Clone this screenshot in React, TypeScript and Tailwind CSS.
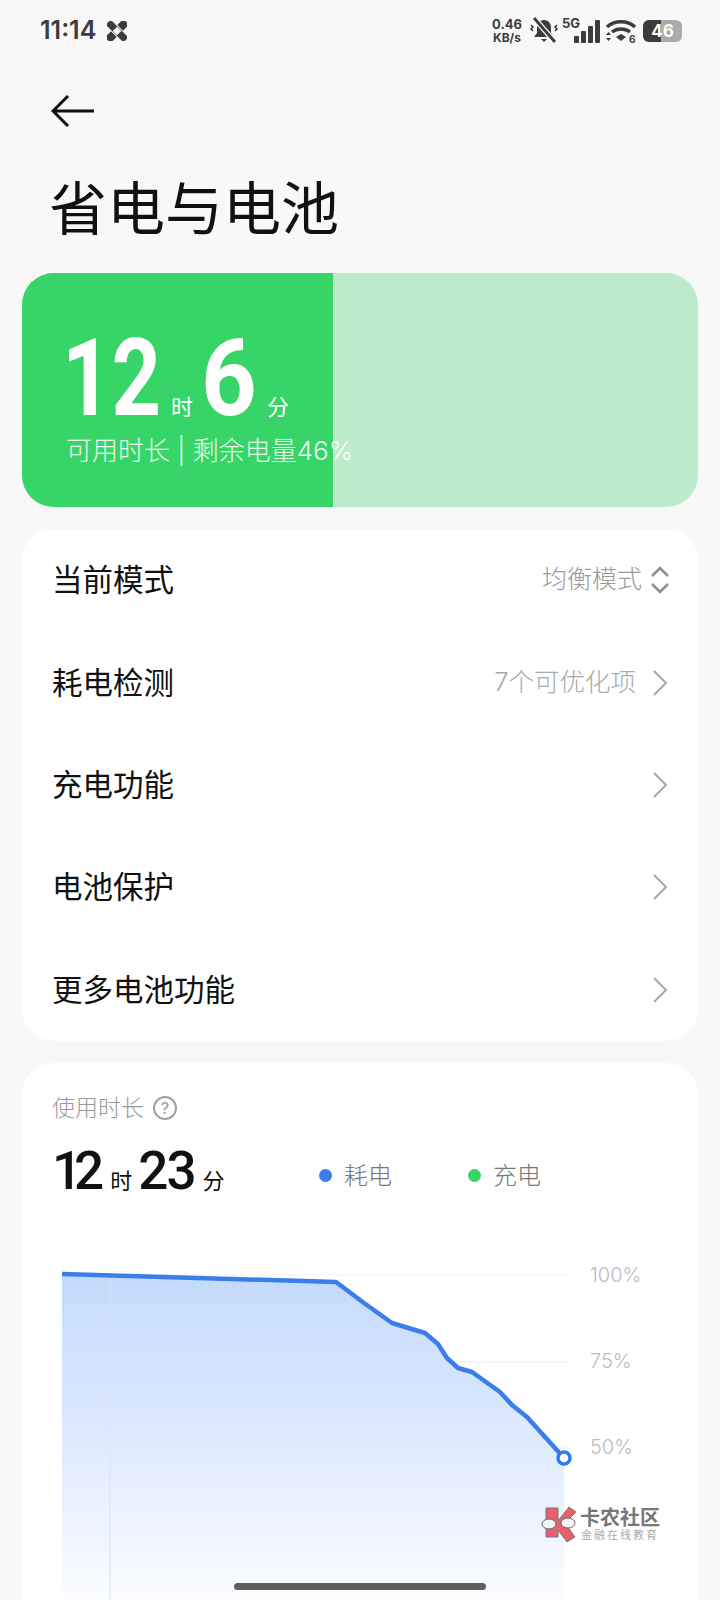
const CJK = "font-['Inter','Noto_Sans_CJK_SC',sans-serif]";

const rows = [
  { label: "耗电检测", value: "7个可优化项" },
  { label: "充电功能" },
  { label: "电池保护" },
  { label: "更多电池功能" },
];

// points of the battery curve, in page coordinates
const curve =
  "62,1274 336,1282 364,1303 392,1323 425,1333 438,1344 447,1358 458,1368 472,1372 500,1392 512,1405 527,1417 564,1458";

function Chevron() {
  return (
    <svg width="16" height="28" viewBox="0 0 16 28" className="block">
      <path d="M2 2l12 12L2 26" stroke="#a8a8a8" strokeWidth="2" fill="none" />
    </svg>
  );
}

function StatusIcons() {
  return (
    <div className="flex items-center text-[#3c3c3c]">
      <div className="mr-[7px] flex flex-col items-center text-[12px] leading-[13px] font-bold">
        <span className="text-[13px]">0.46</span>
        <span>KB/s</span>
      </div>
      {/* muted bell */}
      <svg width="30" height="28" viewBox="0 0 30 28" className="mr-[3px]">
        <path d="M15 3c-5 0-7 4-7 8v5l-3 4h20l-3-4v-5c0-4-2-8-7-8z" fill="#3c3c3c" />
        <path d="M12 22h6l-3 3z" fill="#3c3c3c" />
        <path d="M5 1l21 24" stroke="#f8f8f8" strokeWidth="5.5" />
        <path d="M5 1l21 24" stroke="#3c3c3c" strokeWidth="2.8" />
        <path d="M2 8l2 2-2 2 2 2M28 8l-2 2 2 2-2 2" stroke="#3c3c3c" strokeWidth="1.6" fill="none" />
      </svg>
      <div className="relative h-[26px] w-[38px]">
        <span className="absolute top-[-4px] left-0 text-[13px] font-bold">5G</span>
        <svg width="38" height="26" viewBox="0 0 38 26" className="absolute inset-0">
          <rect x="12" y="18" width="5" height="7" rx="1" fill="#3c3c3c" />
          <rect x="19" y="13" width="5" height="12" rx="1" fill="#3c3c3c" />
          <rect x="26" y="8" width="5" height="17" rx="1" fill="#3c3c3c" />
          <rect x="33" y="2" width="5" height="23" rx="1" fill="#3c3c3c" />
        </svg>
      </div>
      <svg width="32" height="28" viewBox="0 0 32 28" className="mr-[6px] ml-[5px]">
        <path d="M2 10c7-7 21-7 28 0" stroke="#3c3c3c" strokeWidth="3.4" fill="none" />
        <path d="M7 15c5-4 13-4 18 0" stroke="#3c3c3c" strokeWidth="3.4" fill="none" />
        <path d="M11 20l5-3 5 3-5 4z" fill="#3c3c3c" />
        <path d="M1 18l2.5-3 2.5 3zM1 21l2.5 3 2.5-3z" fill="#3c3c3c" />
        <text x="24" y="26" fontSize="10" fontWeight="700" fill="#3c3c3c">6</text>
      </svg>
      <div className="relative flex h-[22px] w-[39px] items-center justify-center overflow-hidden rounded-[6px] bg-[#aaaaaa] text-[17px] leading-[22px] font-bold text-white">
        <div className="absolute inset-y-0 left-0 w-[18px] bg-[#3c3c3c]" />
        <span className="relative">46</span>
      </div>
    </div>
  );
}

function Chart() {
  return (
    <svg width="620" height="340" viewBox="52 1260 620 340" className="mt-[58px] ml-[30px] block">
      <defs>
        <linearGradient id="area" x1="0" y1="1274" x2="0" y2="1600" gradientUnits="userSpaceOnUse">
          <stop offset="0" stopColor="#c4dafc" />
          <stop offset="0.4" stopColor="#d8e7fe" />
          <stop offset="0.8" stopColor="#eff5ff" />
          <stop offset="1" stopColor="#fcfdff" />
        </linearGradient>
      </defs>
      <polygon points={`${curve} 564,1600 62,1600`} fill="url(#area)" />
      {[1275, 1362, 1448, 1534].map((y) => (
        <line key={y} x1="62" x2="570" y1={y} y2={y} stroke="#dfe3ea" strokeWidth="1" strokeDasharray="1 1" />
      ))}
      <line x1="110" x2="110" y1="1274" y2="1600" stroke="#d9e3f3" strokeWidth="1" />
      <polyline points={curve} fill="none" stroke="#3b7dea" strokeWidth="4.5" strokeLinejoin="round" />
      <circle cx="564" cy="1458" r="6" fill="#fff" stroke="#2f7af0" strokeWidth="3.5" />
      <g fontSize="20" fill="#bcbcbc" fontFamily="Inter, sans-serif" fontWeight="300">
        <text x="590" y="1282">100%</text>
        <text x="590" y="1368">75%</text>
        <text x="590" y="1454">50%</text>
      </g>
    </svg>
  );
}

export default function App() {
  return (
    <div className={`relative h-[1600px] w-[720px] overflow-hidden bg-[#f8f8f8] ${CJK}`}>
      {/* status bar */}
      <div className="flex h-[62px] items-center justify-between pr-[38px] pl-[40px]">
        <div className="flex items-center gap-[11px]">
          <span className="text-[25px] font-semibold text-[#3c3c3c]">11:14</span>
          <svg width="20" height="20" viewBox="0 0 20 20">
            <rect x="-3" y="6" width="26" height="8" rx="2" fill="#3c3c3c" transform="rotate(-45 10 10)" />
            <rect x="-3" y="6" width="26" height="8" rx="2" fill="#3c3c3c" transform="rotate(45 10 10)" stroke="#f8f8f8" strokeWidth="1" />
            <rect x="7" y="7" width="6" height="6" fill="#f8f8f8" transform="rotate(45 10 10)" />
          </svg>
        </div>
        <StatusIcons />
      </div>

      {/* back arrow */}
      <div className="mt-[33px] ml-[51px]">
        <svg width="44" height="32" viewBox="0 0 44 32" className="block">
          <path d="M43 16H2M17 1L2 16l15 15" stroke="#111" strokeWidth="3" fill="none" />
        </svg>
      </div>

      <h1 className="mt-[49px] ml-[49px] text-[58px] leading-[66px] font-normal text-[#111]">省电与电池</h1>

      {/* remaining battery */}
      <div className="relative mx-[22px] mt-[31px] h-[234px] overflow-hidden rounded-[32px] bg-[#bcebcb] text-white">
        <div className="absolute inset-y-0 left-0 w-[311px] bg-[#37d467]" />
        <div className="relative pt-[57px] pl-[44px]">
          <div className="flex items-baseline font-['Roboto',sans-serif]">
            <span className="ml-[-4px] inline-block w-[109px] origin-left scale-x-[0.8] text-[108px] leading-[96px] font-bold whitespace-nowrap">
              12
            </span>
            <span className={`text-[22px] ${CJK}`}>时</span>
            <span className="ml-[8px] inline-block w-[66px] origin-left scale-x-[0.9] text-[108px] leading-[96px] font-bold">
              6
            </span>
            <span className={`text-[22px] ${CJK}`}>分</span>
          </div>
          <div className="mt-[7px] text-[26px] leading-[36px] font-light whitespace-nowrap text-white/90">
            可用时长 | 剩余电量46%
          </div>
        </div>
      </div>

      {/* settings list */}
      <div className="mx-[22px] mt-[22px] rounded-[32px] bg-white">
        <div className="flex h-[102.4px] items-center justify-between pr-[28px] pl-[30px]">
          <span className="text-[30.5px] text-[#111]">当前模式</span>
          <div className="flex items-center gap-[8px]">
            <span className="text-[25px] font-light text-[#999]">均衡模式</span>
            <svg width="20" height="32" viewBox="0 0 20 32">
              <path d="M2 12l8-8 8 8M2 20l8 8 8-8" stroke="#8f8f8f" strokeWidth="2.6" fill="none" />
            </svg>
          </div>
        </div>
        {rows.map((r) => (
          <div key={r.label} className="flex h-[102.4px] items-center justify-between pr-[30px] pl-[30px]">
            <span className="text-[30.5px] text-[#111]">{r.label}</span>
            <div className="flex items-center gap-[16px]">
              {r.value && <span className="text-[25.5px] font-light text-[#aaa]">{r.value}</span>}
              <Chevron />
            </div>
          </div>
        ))}
      </div>

      {/* usage */}
      <div className="mx-[22px] mt-[22px] h-[600px] rounded-[32px] bg-white pt-[29px]">
        <div className="flex items-center gap-[8px] pl-[30px]">
          <span className="text-[23px] leading-[32px] font-light text-[#999]">使用时长</span>
          <svg width="26" height="26" viewBox="0 0 26 26">
            <circle cx="13" cy="13" r="11" stroke="#a0a0a0" strokeWidth="2" fill="none" />
            <text x="13" y="19" textAnchor="middle" fontSize="16" fontWeight="500" fill="#a0a0a0">?</text>
          </svg>
        </div>
        <div className="mt-[16px] flex items-center pl-[30px] text-[#111]">
          <div className="flex w-[267px] items-baseline">
            <span className="font-['Roboto',sans-serif] text-[53px] leading-[62px] font-medium tracking-[-8px]">12</span>
            <span className="ml-[14px] text-[22px]">时</span>
            <span className="ml-[6px] font-['Roboto',sans-serif] text-[53px] leading-[62px] font-medium tracking-[-2px]">23</span>
            <span className="ml-[8px] text-[22px]">分</span>
          </div>
          <div className="mt-[10px] flex items-center gap-[12px]">
            <span className="h-[13px] w-[13px] rounded-full bg-[#3b7dea]" />
            <span className="text-[24px] font-light text-[#777]">耗电</span>
          </div>
          <div className="mt-[10px] ml-[76px] flex items-center gap-[12px]">
            <span className="h-[13px] w-[13px] rounded-full bg-[#37d467]" />
            <span className="text-[24px] font-light text-[#777]">充电</span>
          </div>
        </div>
        <Chart />
      </div>

      {/* watermark */}
      <div className="absolute top-[1506px] left-[541px] flex items-center gap-[1px]">
        <svg width="38" height="36" viewBox="0 0 38 36">
          <path d="M5 2h12v13L28 1l7 5-11 11 10 14-8 5-9-12v7H5z" fill="#e8606c" stroke="#777" strokeWidth="1" />
          <ellipse cx="8" cy="18" rx="7" ry="5" fill="#eef4f8" stroke="#666" />
          <ellipse cx="27" cy="17" rx="7" ry="5" fill="#f4f7fa" stroke="#666" />
        </svg>
        <div className="flex flex-col items-center">
          <span className="text-[20px] leading-[22px] font-bold text-[#777]">卡农社区</span>
          <span className="text-[11px] leading-[13px] tracking-[2px] text-[#aaa]">金融在线教育</span>
        </div>
      </div>

      {/* home bar */}
      <div className="absolute top-[1583px] left-[234px] h-[7px] w-[252px] rounded-full bg-[#5f5f5f]" />
    </div>
  );
}
